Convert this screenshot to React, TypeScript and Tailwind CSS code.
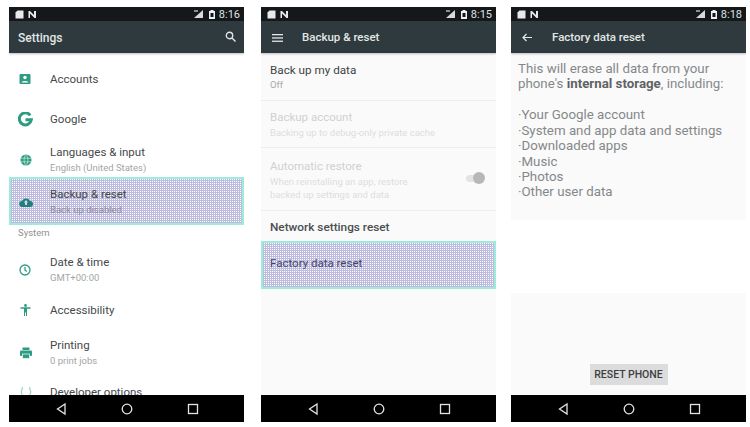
import React from "react";

const dotted = "bg-[#bdbbdf] bg-[conic-gradient(#ffffff_25%,#bdbbdf_0)] bg-[length:2px_2px]";

function StatusBar({ time }: { time: string }) {
  return (
    <div className="h-[14px] shrink-0 bg-[#14181a] flex items-center justify-between pl-[6px] pr-[4px]">
      <div className="flex items-center gap-[4px]">
        <svg width="9" height="9" viewBox="0 0 9 9"><path d="M2.500 .5H8.500V8.500H.5V2.500Z" fill="#e8eaea" /></svg>
        <svg width="8" height="7" viewBox="0 0 8 7"><path d="M.5 0 L2 0 L6 4 V0 H8 V7 H6.500 L2 2.500 V7 H.5Z" fill="#e8eaea" /></svg>
      </div>
      <div className="flex items-center gap-[3px] text-[#dfe2e2] text-[11px] leading-none">
        <svg width="9" height="8" viewBox="0 0 9 8" className="mr-[3px]"><path d="M9 0V8H0Z" fill="#d8dada" /><path d="M0 0H4V2H0Z" fill="#8a8e8e" /></svg>
        <svg width="6" height="9" viewBox="0 0 6 9"><path d="M1.500 0H4.500V1H6V9H0V1H1.500Z" fill="#f0f2f2" /><rect x="1.500" y="3" width="3" height="4" fill="#14181a" /></svg>
        <span className="ml-[1px]">{time}</span>
      </div>
    </div>
  );
}

function NavBar() {
  return (
    <div className="h-[27px] shrink-0 bg-black flex items-center">
      <svg width="235" height="27" viewBox="0 0 235 27" fill="none" stroke="#e4e4e4" strokeWidth="1.300">
        <path d="M56 9 L48.500 14 L56 19Z" />
        <circle cx="118" cy="14" r="4.800" />
        <rect x="179.500" y="9.500" width="9" height="9" />
      </svg>
    </div>
  );
}

function Toolbar({ children }: { children: React.ReactNode }) {
  return (
    <div className="h-[32px] shrink-0 bg-[#2e3a3d] shadow-[0_1px_2px_rgba(0,0,0,0.25)] flex items-center pt-[1px] text-[#e2e6e6] text-[11.5px] font-medium z-10">
      {children}
    </div>
  );
}

function Phone({ time, bar, children, bg = "bg-white" }: { time: string; bar: React.ReactNode; children: React.ReactNode; bg?: string }) {
  return (
    <div className="w-[235px] h-[415px] flex flex-col overflow-hidden">
      <StatusBar time={time} />
      <Toolbar>{bar}</Toolbar>
      <div className={`flex-1 min-h-0 overflow-hidden flex flex-col ${bg}`}>{children}</div>
      <NavBar />
    </div>
  );
}

const teal = "#2e9c82";

function SettingRow({ h, icon, title, sub, selected }: { h: string; icon: React.ReactNode; title: string; sub?: string; selected?: boolean }) {
  return (
    <div className={`${h} shrink-0 flex items-center ${selected ? `${dotted} border-2 border-[#9cecd9] pt-[1px]` : ""}`}>
      <div className={`${selected ? "w-[39px] pl-[8px]" : "w-[41px] pl-[10px]"} shrink-0 flex items-center`}>{icon}</div>
      <div className="flex flex-col">
        <div className="text-[11.5px] leading-[15px] text-[#45494b]">{title}</div>
        {sub && <div className={`text-[9.5px] leading-[15px] ${selected ? "text-[#8a8a9e]" : "text-[#a2a6a6]"}`}>{sub}</div>}
      </div>
    </div>
  );
}

const IconAccount = () => (
  <svg width="12" height="12" viewBox="0 0 12 12"><rect x=".5" y="1" width="11" height="10" rx="1" fill={teal} /><circle cx="6" cy="4.500" r="1.700" fill="#fff" /><path d="M2.500 9.500c.5-2 6.500-2 7 0Z" fill="#fff" /></svg>
);
const IconG = () => (
  <svg width="15" height="15" viewBox="0 0 15 15" fill="none" className="-ml-[1px]"><path d="M12.200 3.300A6 6 0 1 0 13.300 7.800H7.500" stroke={teal} strokeWidth="3" /></svg>
);
const IconGlobe = () => (
  <svg width="12" height="12" viewBox="0 0 12 12" className="ml-[0.5px]"><circle cx="6" cy="6" r="5.500" fill={teal} /><path d="M.5 4.200H11.500M.5 7.800H11.500M6 .5C3.500 3 3.500 9 6 11.500C8.500 9 8.500 3 6 .5" stroke="#cfe9e2" strokeWidth=".7" fill="none" /></svg>
);
const IconCloud = () => (
  <svg width="14" height="10" viewBox="0 0 14 10"><path d="M3.500 10a3 3 0 0 1-.5-6A4.500 4.500 0 0 1 11 4a3 3 0 0 1 0 6Z" fill="#1f7f7c" /><path d="M7 3L4.800 5.500H6V8H8V5.500H9.200Z" fill="#d5d5ea" /></svg>
);
const IconClock = () => (
  <svg width="12" height="12" viewBox="0 0 12 12" fill="none" stroke={teal} strokeWidth="1.300"><circle cx="6" cy="6" r="5" /><path d="M6 3V6.200L8 7.500" /></svg>
);
const IconAccess = () => (
  <svg width="11" height="12" viewBox="0 0 11 12" className="ml-[1px]"><circle cx="5.500" cy="1.500" r="1.400" fill={teal} /><path d="M.5 3.300H10.500V4.700H7V12H6V8.500H5V12H4V4.700H.5Z" fill={teal} /></svg>
);
const IconPrint = () => (
  <svg width="12" height="12" viewBox="0 0 12 12" className="ml-[0.5px]"><rect x="2.500" y=".5" width="7" height="2.500" fill={teal} /><rect y="3.500" width="12" height="5.500" rx="1" fill={teal} /><rect x="2.500" y="7" width="7" height="4.500" fill={teal} stroke="#fff" strokeWidth=".7" /></svg>
);
const IconDev = () => (
  <svg width="12" height="12" viewBox="0 0 12 12" fill="none" stroke="#7fc7b5" strokeWidth="1" className="ml-[0.5px]"><path d="M3 1C1.500 1 2.500 5 1 6C2.500 7 1.500 11 3 11M9 1C10.500 1 9.500 5 11 6C9.500 7 10.500 11 9 11" /></svg>
);

function ResetRow({ title, sub, disabled, right }: { title: string; sub?: string; disabled?: boolean; right?: React.ReactNode }) {
  return (
    <div className="flex items-center justify-between h-full pt-[2px] pl-[9px] pr-[12px]">
      <div>
        <div className={`text-[11.5px] leading-[15px] ${disabled ? "text-[#cfd1d1]" : "text-[#3f4345] text-[11.7px]"}`}>{title}</div>
        {sub && <div className={`${right ? "max-w-[165px]" : ""} text-[9.5px] leading-[12.500px] ${disabled ? "mt-[2px] text-[#dcdede]" : "mt-[1px] text-[#a8aaaa]"}`}>{sub}</div>}
      </div>
      {right}
    </div>
  );
}

export default function App() {
  return (
    <div className="w-[750px] h-[427px] bg-white overflow-hidden pt-[7px] pl-[9px] flex font-['Roboto',sans-serif]">
      <Phone
        time="8:16"
        bar={
          <div className="flex flex-1 items-center justify-between pl-[9px] pr-[8px]">
            <span className="text-[12px]">Settings</span>
            <svg width="11" height="11" viewBox="0 0 11 11" fill="none" stroke="#dfe3e3" strokeWidth="1.400" className="-mt-[2px]"><circle cx="4.500" cy="4.500" r="3.200" /><path d="M7 7L10.500 10.500" /></svg>
          </div>
        }
      >
        <div className="h-[6px] shrink-0" />
        <SettingRow h="h-[40px]" icon={<IconAccount />} title="Accounts" />
        <SettingRow h="h-[40px]" icon={<IconG />} title="Google" />
        <div className="h-[38px] shrink-0 pt-[3px] flex flex-col">
          <SettingRow h="h-[35px]" icon={<IconGlobe />} title="Languages & input" sub="English (United States)" />
        </div>
        <SettingRow h="h-[48px]" icon={<IconCloud />} title="Backup & reset" sub="Back up disabled" selected />
        <div className="h-[15px] shrink-0 pl-[9px] text-[9.500px] leading-[15px] text-[#8d9191]">System</div>
        <SettingRow h="h-[59px]" icon={<IconClock />} title="Date & time" sub="GMT+00:00" />
        <SettingRow h="h-[22px]" icon={<IconAccess />} title="Accessibility" />
        <div className="h-[10px] shrink-0" />
        <SettingRow h="h-[44px]" icon={<IconPrint />} title="Printing" sub="0 print jobs" />
        <SettingRow h="h-[34px]" icon={<IconDev />} title="Developer options" />
      </Phone>

      <div className="w-[17px] shrink-0" />

      <Phone
        time="8:15"
        bg="bg-[#fafafa]"
        bar={
          <div className="flex items-center pl-[11px]">
            <svg width="11" height="8" viewBox="0 0 11 8" fill="#e2e6e6"><rect width="11" height="1.300" /><rect y="3.300" width="11" height="1.300" /><rect y="6.600" width="11" height="1.300" /></svg>
            <span className="ml-[19px]">Backup &amp; reset</span>
          </div>
        }
      >
        <div className="h-[48px] shrink-0 border-b border-[#eeeeee]"><ResetRow title="Back up my data" sub="Off" /></div>
        <div className="h-[47px] shrink-0 border-b border-[#eeeeee]"><ResetRow title="Backup account" sub="Backing up to debug-only private cache" disabled /></div>
        <div className="h-[63px] shrink-0 border-b border-[#eeeeee]">
          <ResetRow
            title="Automatic restore"
            sub="When reinstalling an app, restore backed up settings and data"
            disabled
            right={
              <div className="relative w-[18px] h-[7px] rounded-full bg-[#e2e4e4] shrink-0 ml-[8px] -mt-[4px]">
                <div className="absolute -right-[1px] -top-[2.500px] w-[12px] h-[12px] rounded-full bg-[#b6b8b8]" />
              </div>
            }
          />
        </div>
        <div className="h-[30px] shrink-0 pl-[9px] pt-[3px] flex items-center text-[11.800px] font-medium text-[#4a4e50]">Network settings reset</div>
        <div className={`h-[48px] shrink-0 ${dotted} border-2 border-[#9cecd9] pl-[7px] pb-[2px] flex items-center text-[11.500px] text-[#45456a]`}>Factory data reset</div>
      </Phone>

      <div className="w-[15px] shrink-0" />

      <Phone
        time="8:18"
        bg="bg-white"
        bar={
          <div className="flex items-center pl-[11px]">
            <svg width="10" height="9" viewBox="0 0 10 9" fill="none" stroke="#e2e6e6" strokeWidth="1.200"><path d="M10 4.500H1M4.500 1L1 4.500L4.500 8" /></svg>
            <span className="ml-[20px]">Factory data reset</span>
          </div>
        }
      >
        <div className="h-[167px] shrink-0 bg-[#fafafa] pl-[7px] pt-[8px] text-[13.300px] leading-[15.400px] text-[#85888a]">
          <p>This will erase all data from your</p>
          <p>phone's <span className="font-bold text-[#5f6365]">internal storage</span>, including:</p>
          <div className="h-[15.500px]" />
          <p>·Your Google account</p>
          <p>·System and app data and settings</p>
          <p>·Downloaded apps</p>
          <p>·Music</p>
          <p>·Photos</p>
          <p>·Other user data</p>
        </div>
        <div className="flex-1" />
        <div className="h-[102px] shrink-0 bg-[#fafafa] flex items-end justify-center pb-[10px]">
          <div className="w-[78px] h-[21px] bg-[#dcdcdc] flex items-center justify-center text-[10.500px] font-medium text-[#3c4042]">RESET PHONE</div>
        </div>
      </Phone>
    </div>
  );
}
